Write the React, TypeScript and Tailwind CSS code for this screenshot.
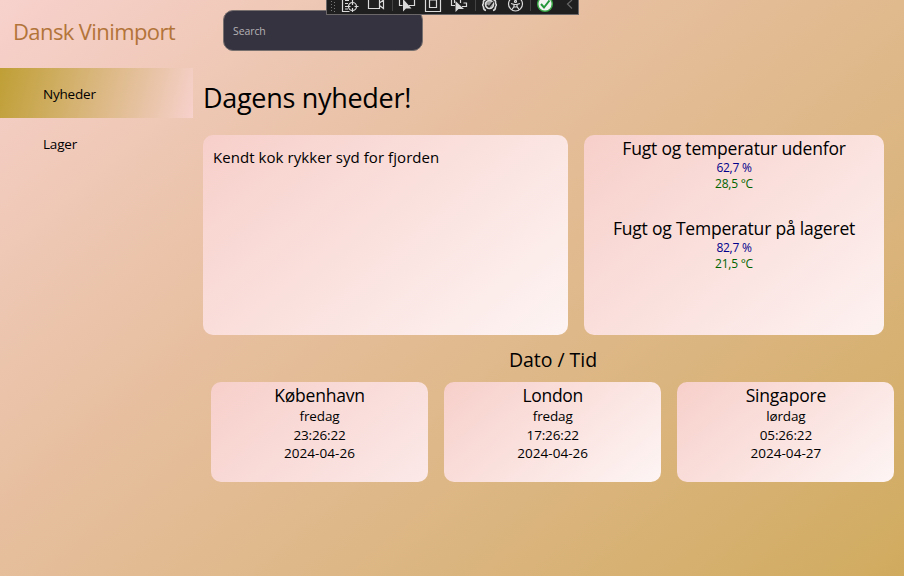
const cities = [
  { name: "København", day: "fredag", time: "23:26:22", date: "2024-04-26", fill: "to-[#fbe9e8]", title: "tracking-[-0.2px]" },
  { name: "London", day: "fredag", time: "17:26:22", date: "2024-04-26", fill: "to-[#fdf5f4]", title: "tracking-[-0.3px]" },
  { name: "Singapore", day: "lørdag", time: "05:26:22", date: "2024-04-27", fill: "to-[#fdf5f4]", title: "tracking-[-0.2px]" },
];

const card = "rounded-[10px] bg-linear-140 from-[#f7cfca]";

function Reading({ title, humidity, temperature }: { title: string; humidity: string; temperature: string }) {
  return (
    <div className="flex h-20 flex-col items-center">
      <h3 className="h-6 text-[17.5px] leading-[26px] tracking-[-0.2px]">{title}</h3>
      <p className="h-4 text-[12px] leading-[17px] tracking-[-0.25px] text-[#00008b]">{humidity}</p>
      <p className="h-4 text-[12px] leading-[17px] tracking-[-0.25px] text-[#006400]">{temperature}</p>
    </div>
  );
}

function DebugBar() {
  return (
    <div className="absolute left-[326px] top-0 h-[15px] w-[253px] border border-t-0 border-[#6b6668] bg-[#1f1f1f]">
      <svg width="251" height="14" viewBox="327 0 251 14" fill="none" stroke="#dadada" strokeWidth="1.2">
        <path d="M331.5 1v12M334.5 2v11" stroke="#777" strokeWidth="1" strokeDasharray="1 2" />
        <path d="M342.5 0v11.5h7M345 .5h4M345 3.5h3M345 6.5h3M345 9h3" />
        <circle cx="352.5" cy="6.5" r="4" />
        <path d="M352.5 0v5M352.5 8v4M346.5 6.5h4M354.5 6.5h4" />
        <path d="M368.5 0v8.5h11v-8.5M379.5 3l4-3v8.5l-4-3" />
        <path d="M392.5 0v11M475.5 0v11M530.5 0v11" stroke="#444" strokeWidth="1" />
        <path d="M399.5 0v5.5h3M409 5.5h5.5v-5.5" />
        <path d="M403 0v11.5l3-3h5.5l-7.5-8.5z" fill="#dadada" stroke="none" />
        <path d="M425.5 0v11.5h15v-11.5M429.5 0v7.5h7v-7.5z" />
        <path d="M451.5 0v5.5h3.5M462 6.5h4.5v-3.5h-3M454.5 3v-3M460.5 3v-3" />
        <path d="M455.5 1v11l3-3h5.5z" fill="#dadada" stroke="none" />
        <path d="M485.5 0q-2.5 0-2 3q-.5 2-1.5 2q1 0 1.5 2q0 3 2.500 3.500M493.500 0q2.500 0 2 3q.5 2 1.500 2q-1 0-1.500 2q0 3-2.500 3.500" strokeWidth="1.6" />
        <circle cx="489.5" cy="4.5" r="4" fill="#999" strokeWidth="1.6" />
        <path d="M487 5l2 2 4-5" stroke="#222" strokeWidth="1.5" />
        <circle cx="515.5" cy="4" r="7" />
        <path d="M511 3.5l3 1v2l-2 3M520 3.5l-3 1v2l2 3M514 4.5h3M514 7h3" />
        <circle cx="515.5" cy="1.5" r="1" />
        <circle cx="545" cy="4" r="7.3" fill="#f2f2f2" stroke="#38a845" strokeWidth="1.5" />
        <path d="M541 4l3 3.5 5.5-7" stroke="#24963a" strokeWidth="2" />
        <path d="M572 0l-4.5 4 4.5 4.5" stroke="#666" />
      </svg>
    </div>
  );
}

export default function App() {
  return (
    <div className="relative flex h-[576px] w-[904px] overflow-hidden bg-linear-140 from-[#f7d1cc] via-[#e8c0a2] via-36% to-[#d0ab5e] font-['Open_Sans',sans-serif] text-black">
      <aside className="w-[193px] shrink-0">
        <h1 className="h-[68px] pl-[13px] pt-[15px] text-[22px] leading-[33px] tracking-[-0.6px] whitespace-nowrap text-[#b37439]">Dansk Vinimport</h1>
        <nav className="text-[13.5px] tracking-[-0.2px]">
          <a className="flex h-[50px] items-center bg-[linear-gradient(104.5deg,#bf9f35,#e8c3a5_75%,#f7d1cc)] pl-[43px] pt-[3px]">Nyheder</a>
          <a className="flex h-[50px] items-center pl-[43px] pt-[3px]">Lager</a>
        </nav>
      </aside>
      <main className="flex flex-1 flex-col">
        <div className="h-[72px] pl-[30px] pt-[10px]">
          <div className="flex h-[41px] w-[200px] items-center rounded-[10px] border border-[#77706f] bg-[#363340] pl-[9px] pt-[2px] text-[10.5px] tracking-[-0.1px] text-[#b4b2b5]">Search</div>
        </div>
        <h2 className="h-[63px] pl-[10px] text-[27px] leading-[52px] tracking-[-0.3px]">Dagens nyheder!</h2>
        <section className="flex h-[200px] gap-4 pl-[10px]">
          <article className={`${card} to-[#fdf4f3] h-[200px] w-[365px] pl-[10px] pt-[11px] text-[15px] leading-[22px] tracking-[0.06px]`}>Kendt kok rykker syd for fjorden</article>
          <article className={`${card} to-[#fdf2f1] h-[200px] w-[300px]`}>
            <Reading title="Fugt og temperatur udenfor" humidity="62,7 %" temperature="28,5 °C" />
            <Reading title="Fugt og Temperatur på lageret" humidity="82,7 %" temperature="21,5 °C" />
          </article>
        </section>
        <h2 className="h-[47px] pl-[9px] text-center text-[19.5px] leading-[50px] tracking-[-0.05px]">Dato / Tid</h2>
        <section className="flex gap-[16.2px] pl-[18px]">
          {cities.map((c) => (
            <article key={c.name} className={`${card} ${c.fill} flex h-[100px] w-[217px] shrink-0 flex-col items-center text-[13.5px] leading-[18px] tracking-[0.04px]`}>
              <h3 className={`h-[25px] text-[17.5px] leading-[26px] ${c.title}`}>{c.name}</h3>
              <p className="h-[19px] tracking-[-0.15px]">{c.day}</p>
              <p className="h-[18px] tracking-[-0.15px]">{c.time}</p>
              <p>{c.date}</p>
            </article>
          ))}
        </section>
      </main>
      <DebugBar />
    </div>
  );
}
